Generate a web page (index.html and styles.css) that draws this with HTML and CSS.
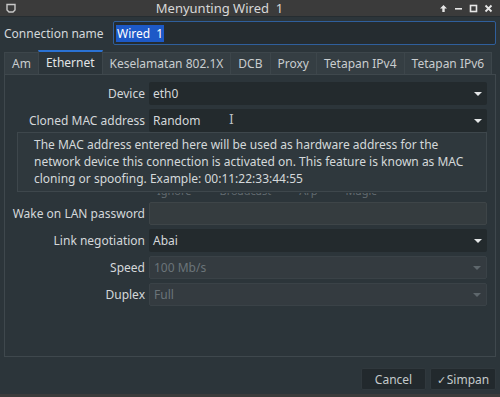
FILE: index.html
```html
<!DOCTYPE html>
<html lang="en">
<head>
    <meta charset="UTF-8">
    <title>Menyunting Wired 1</title>
    <link rel="stylesheet" href="styles.css">
</head>
<body>

<div class="titlebar">
    <svg class="app-icon" width="10" height="10" viewBox="0 0 10 10">
        <path d="M1 1.5h8v5.5l-2 2h-4l-2-2z" fill="none" stroke="#c8c8c8" stroke-width="1.4"/>
    </svg>
    <div class="title">Menyunting Wired&nbsp; 1</div>
    <div class="wm-buttons">
        <svg width="9" height="9" viewBox="0 0 9 9"><path d="M4.5 1l3.5 3.5h-2.3v3.5h-2.4v-3.5h-2.3z" fill="#e6e6e6"/></svg>
        <svg width="9" height="9" viewBox="0 0 9 9"><rect x="1" y="4" width="7" height="1.6" fill="#e6e6e6"/></svg>
        <svg width="9" height="9" viewBox="0 0 9 9"><rect x="1.5" y="1.5" width="6" height="6" fill="none" stroke="#e6e6e6" stroke-width="1.6"/></svg>
        <svg width="9" height="9" viewBox="0 0 9 9"><path d="M1.5 1.5l6 6M7.5 1.5l-6 6" stroke="#e6e6e6" stroke-width="1.8"/></svg>
    </div>
</div>

<div class="dialog">
    <div class="name-row">
        <label class="name-label">Connection name</label>
        <div class="name-input"><span class="selected">Wired&nbsp; 1</span></div>
    </div>

    <div class="tabs">
        <div class="tab">Am</div>
        <div class="tab active">Ethernet</div>
        <div class="tab">Keselamatan 802.1X</div>
        <div class="tab">DCB</div>
        <div class="tab">Proxy</div>
        <div class="tab">Tetapan IPv4</div>
        <div class="tab">Tetapan IPv6</div>
    </div>

    <div class="panel">
        <div class="form">
            <div class="label">Device</div>
            <div class="combo">eth0<span class="arrow"></span></div>

            <div class="label">Cloned MAC address</div>
            <div class="combo">Random<span class="cursor">I</span><span class="arrow"></span></div>

            <div class="label"></div>
            <div class="wol">
                <div class="wol-row">
                    <span>Ignore</span><span>Broadcast</span><span>Arp</span><span>Magic</span>
                </div>
            </div>

            <div class="label">Wake on LAN password</div>
            <div class="textbox"></div>

            <div class="label">Link negotiation</div>
            <div class="combo">Abai<span class="arrow"></span></div>

            <div class="label">Speed</div>
            <div class="combo disabled">100 Mb/s<span class="arrow"></span></div>

            <div class="label">Duplex</div>
            <div class="combo disabled">Full<span class="arrow"></span></div>
        </div>

        <div class="tooltip">
            The MAC address entered here will be used as hardware address for the
            network device this connection is activated on. This feature is known as MAC
            cloning or spoofing. Example: 00:11:22:33:44:55
        </div>
    </div>

    <div class="buttons">
        <button class="btn">Cancel</button>
        <button class="btn"><span class="check">&#10003;</span>Simpan</button>
    </div>
</div>

</body>
</html>
```

FILE: styles.css
```css
body {
    margin: 0;
    width: 500px;
    height: 397px;
    overflow: hidden;
    font-family: "Noto Sans", sans-serif;
    font-size: 12px;
    color: #d4d8da;
    background-color: #2c353a;
    border-bottom: 3px solid #3b3b3b;
    box-sizing: border-box;
}

.titlebar {
    height: 16px;
    display: flex;
    align-items: center;
    background-color: #3b3b3b;
    border-bottom: 1px solid #262d31;
    color: #d8d8d8;
}

.app-icon {
    margin-left: 6px;
    width: 10px;
}

.title {
    flex: 1;
    text-align: center;
    font-size: 13px;
    line-height: 16px;
    padding-right: 16px;
}

.wm-buttons {
    display: flex;
    gap: 6px;
    padding-right: 7px;
}

.dialog {
    padding: 4px 4px 0 4px;
}

.name-row {
    display: flex;
    align-items: center;
    height: 24px;
}

.name-label {
    width: 109px;
}

.name-input {
    flex: 1;
    height: 22px;
    border: 1px solid #2f5f9c;
    border-radius: 2px;
    background-color: #252c30;
    display: flex;
    align-items: center;
    padding-left: 2px;
}

.selected {
    background-color: #1d59c7;
    color: #ffffff;
    line-height: 17px;
    padding: 0 1px;
}

.tabs {
    display: flex;
    margin-top: 7px;
    height: 22px;
    align-items: flex-end;
}

.tab {
    height: 21px;
    line-height: 21px;
    padding: 0 7px;
    background-color: #353e43;
    border: 1px solid #3d464b;
    border-bottom: none;
    color: #c9cdcf;
    margin-right: -1px;
    white-space: nowrap;
}

.tab.active {
    height: 22px;
    line-height: 21px;
    background-color: #2c353a;
    border-top: 2px solid #2a72d4;
    color: #e2e5e6;
    padding: 0 7px;
}

.panel {
    position: relative;
    height: 281px;
    border: 1px solid #3f484d;
}

.form {
    display: grid;
    grid-template-columns: 140px 338px;
    column-gap: 4px;
    row-gap: 4px;
    padding-top: 7px;
}

.label {
    text-align: right;
    line-height: 23px;
    white-space: nowrap;
}

.combo,
.textbox {
    position: relative;
    height: 23px;
    line-height: 23px;
    padding-left: 4px;
    background-color: #232a2d;
    border-radius: 2px;
    box-sizing: border-box;
}

.textbox {
    background-color: #353c3f;
    border: 1px solid #3e4548;
}

.combo.disabled {
    background-color: #343b40;
    border: 1px solid #3a4247;
    color: #6b7479;
    line-height: 21px;
}

.arrow {
    position: absolute;
    right: 5px;
    top: 10px;
    width: 0;
    height: 0;
    border-left: 4px solid transparent;
    border-right: 4px solid transparent;
    border-top: 4px solid #e4e6e7;
}

.combo.disabled .arrow {
    top: 9px;
    border-top-color: #5e676c;
}

.cursor {
    position: absolute;
    left: 80px;
    top: 0;
    font-family: "DejaVu Serif", serif;
    color: #bfc3c5;
    font-size: 12px;
}

.wol {
    height: 62px;
    display: flex;
    align-items: flex-end;
}

.wol-row {
    display: flex;
    gap: 28px;
    height: 5px;
    overflow: hidden;
    padding-left: 8px;
    color: #626b70;
    font-size: 11px;
    line-height: 14px;
    white-space: nowrap;
}

.wol-row span {
    margin-top: -9px;
}

.tooltip {
    position: absolute;
    left: 12px;
    top: 57px;
    width: 452px;
    height: 55px;
    padding: 3px 0 0 16px;
    background-color: #2f383d;
    border: 1px solid #3e474c;
    color: #d4d8da;
    font-size: 12px;
    line-height: 17px;
}

.buttons {
    display: flex;
    justify-content: flex-end;
    gap: 4px;
    margin-top: 11px;
}

.btn {
    height: 22px;
    font-family: "Noto Sans", sans-serif;
    font-size: 12px;
    color: #c4c9cb;
    background-color: #22292d;
    border: 1px solid #30383d;
    border-radius: 2px;
    padding: 0 12px;
}

.btn:first-child {
    width: 65px;
}

.btn:last-child {
    width: 66px;
    padding: 0 4px;
}

.check {
    font-size: 11px;
    margin-right: 1px;
}
```
